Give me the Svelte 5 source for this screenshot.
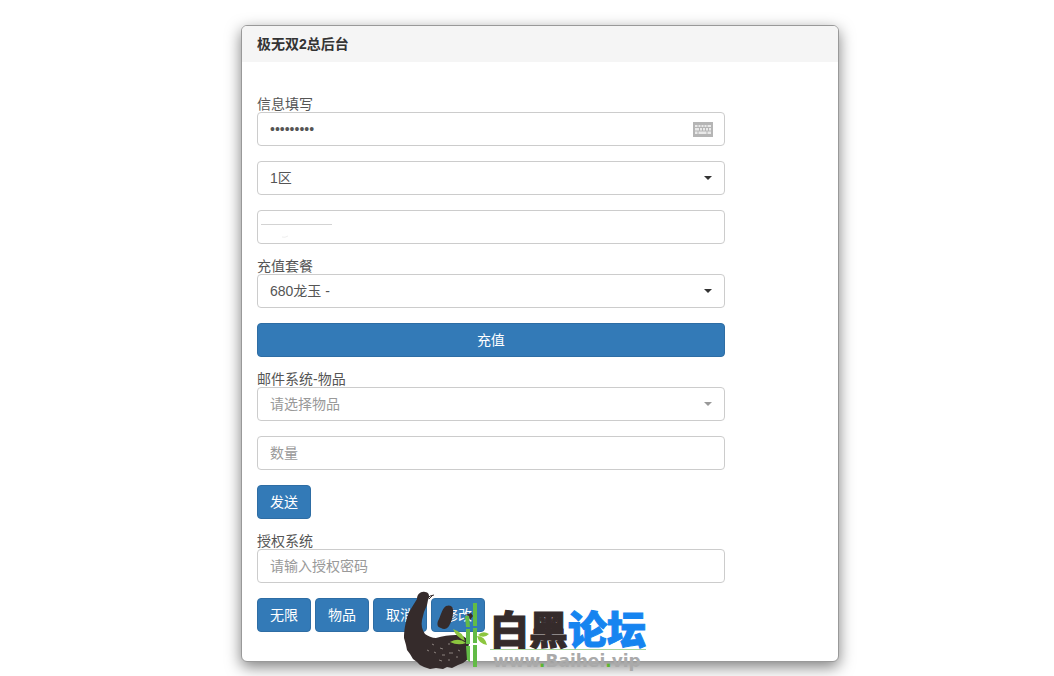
<script>
    let password = $state('123456789')
    let zone = $state('1')
    let account = $state('')
    let pack = $state('680')
    let item = $state('')
    let amount = $state('')
    let authCode = $state('')

    const authActions = ['无限', '物品', '取消', '修改']
</script>

{#snippet caret()}
    <svg class="caret" viewBox="0 0 8 4" width="8" height="4" aria-hidden="true">
        <path d="M0 0h8L4 4z" fill="currentColor" />
    </svg>
{/snippet}

<main>
    <section class="panel">
        <header>
            <h1>极无双2总后台</h1>
        </header>

        <form onsubmit={(e) => e.preventDefault()}>
            <div class="group">
                <label for="password">信息填写</label>
                <div class="field">
                    <input id="password" type="password" bind:value={password} />
                    <svg class="keyboard" viewBox="0 0 20 15" width="20" height="15" aria-hidden="true">
                        <path d="M0 0h20v15H0z" fill="#b5b5b5" />
                        <path d="M2 3h16v9H2z" fill="#e9e9e9" />
                        <path d="M2 5.5h16M2 9h16M5 3v2.500M8 3v2.500M11 3v2.500M14 3v2.500M6.500 5.500V9M9.500 5.500V9M12.500 5.500V9M15.500 5.500V9M5 9v3M14 9v3" stroke="#b5b5b5" fill="none" />
                    </svg>
                </div>
            </div>

            <div class="field">
                <select aria-label="区服" bind:value={zone}>
                    <option value="1">1区</option>
                </select>
                {@render caret()}
            </div>

            <div class="field">
                <input type="text" aria-label="账号" bind:value={account} />
                <svg class="stroke" viewBox="0 0 72 18" width="72" height="18" aria-hidden="true">
                    <path d="M0 4.500h71" stroke="#d3d3d3" />
                    <path d="M21 17q3 1 6-1" stroke="#eee" fill="none" />
                </svg>
            </div>

            <div class="group">
                <label for="pack">充值套餐</label>
                <div class="field">
                    <select id="pack" bind:value={pack}>
                        <option value="680">680龙玉 -</option>
                    </select>
                    {@render caret()}
                </div>
            </div>

            <button class="block">充值</button>

            <div class="group">
                <label for="item">邮件系统-物品</label>
                <div class="field" class:empty={!item}>
                    <select id="item" bind:value={item}>
                        <option value="">请选择物品</option>
                    </select>
                    {@render caret()}
                </div>
            </div>

            <div class="field">
                <input type="text" aria-label="数量" placeholder="数量" bind:value={amount} />
            </div>

            <div class="actions">
                <button>发送</button>
            </div>

            <div class="group">
                <label for="auth">授权系统</label>
                <div class="field">
                    <input id="auth" type="text" placeholder="请输入授权密码" bind:value={authCode} />
                </div>
            </div>

            <div class="actions">
                {#each authActions as action}
                    <button>{action}</button>
                {/each}
            </div>
        </form>

        <div class="brand">
            <svg viewBox="0 0 86 80" width="86" height="80" aria-hidden="true">
                <g fill="#352b2b">
                    <path d="M13 8C13 3 17 0 21 1c4 0 5 4 3 8l-1 5-3 7-2 8c-1 5 0 10 3 14 3 2 7 4 11 4 6-2 14-3 20-3 8 0 13 4 13 9l-1 4 1 4-2 4v4l-4 3-5 2-6 3-5-1-4 2-7-1-6 1-6-2-4-2-3-3-4-3-3-5-3-4-1-5-2-7C0 41 1 31 5 21z" />
                    <path d="M42 15c5-2 8 1 7 7 0 5-2 9-4 13-2 3-5 4-8 2-4-1-4-4-3-7 3-5 3-11 8-15z" />
                </g>
                <path d="M22 9l4-4 4-1M25 8l4-4" stroke="#352b2b" fill="none" />
                <path d="M28 53l2 1M36 57l3 1M44 53h2M50 51l3 1M23 59l2 1M30 61l2 1M38 64h3M45 62h4M54 59l2 1M35 69l3 1M44 69h2M52 66h2" stroke="#8d8480" fill="none" />
                <g fill="#62bb46">
                    <path d="M61 25h4l1 11h-4zM62 38h4v15h-4zM62 55h4v16l-3-2zM69 12h4v23h-4zM69 37h4v15h-4zM69 54h4v22h-4z" />
                    <path fill="#8cc63f" d="M61 50q-9-4-12-12 10 3 12 12zM62 52q-8 3-16-1 9-5 16 1zM74 44q5-5 11-1-5 5-11 1zM73 45q8 0 10 9-8-1-10-9z" />
                </g>
                <path d="M61 24l6-2 2 3-3 4-1-4z" fill="#352b2b" />
            </svg>
            <div class="wordmark">
                <strong>白黑<span>论坛</span></strong>
                <small>www<i>.</i>Baihei<i>.</i>vip</small>
            </div>
        </div>
    </section>
</main>

<style>
    :global(body) {
        background: #fff;
        color: #555;
        font: 14px/20px "Liberation Sans", "Noto Sans CJK SC", sans-serif;
    }

    :global(*) {
        box-sizing: border-box;
    }

    main {
        padding: 25px 0 15px 26px;
        overflow: hidden;
    }

    .panel {
        position: relative;
        max-width: 598px;
        margin: 0 auto;
        background: #fff;
        border: 1px solid #999;
        border-radius: 6px;
        box-shadow: 0 5px 15px rgba(0, 0, 0, 0.5);
    }

    header {
        padding: 8px 15px;
        background: #f5f5f5;
        border-radius: 5px 5px 0 0;
    }

    h1 {
        margin: 0;
        color: #333;
        font-size: 14px;
        line-height: 20px;
    }

    form {
        display: flex;
        flex-direction: column;
        gap: 15px;
        width: 81%;
        padding: 35px 0 29px 15px;
    }

    label {
        display: block;
        line-height: 15px;
    }

    .field {
        position: relative;
    }

    input,
    select {
        display: block;
        width: 100%;
        height: 34px;
        padding: 6px 12px;
        appearance: none;
        color: #555;
        background: #fff;
        border: 1px solid #ccc;
        border-radius: 4px;
        font: inherit;
    }

    input::placeholder,
    .empty select {
        color: #999;
        opacity: 1;
    }

    .caret {
        position: absolute;
        top: 15px;
        right: 13px;
        color: #333;
        pointer-events: none;
    }

    .empty .caret {
        color: #999;
    }

    .keyboard {
        position: absolute;
        top: 10px;
        right: 12px;
    }

    .stroke {
        position: absolute;
        top: 10px;
        left: 4px;
    }

    button {
        height: 34px;
        padding: 6px 12px;
        color: #fff;
        background: #337ab7;
        border: 1px solid #2e6da4;
        border-radius: 4px;
        font: inherit;
    }

    .block {
        width: 100%;
    }

    .actions {
        display: flex;
        gap: 4px;
    }

    .brand {
        position: absolute;
        left: 162px;
        bottom: -10px;
        display: flex;
        align-items: flex-end;
        pointer-events: none;
    }

    .wordmark {
        display: flex;
        flex-direction: column;
        gap: 1px;
        color: #352b2b;
    }

    strong {
        border-bottom: 1px solid #a9d39b;
        font: 900 39px/36px "Liberation Sans", "Noto Sans CJK SC", sans-serif;
        -webkit-text-stroke: 1px currentColor;
    }

    strong span {
        color: #1684f0;
    }

    small {
        padding-left: 3px;
        color: #aaa;
        font: bold 17px/20px "DejaVu Sans", sans-serif;
    }

    i {
        color: #5cb531;
        font-style: normal;
    }
</style>
